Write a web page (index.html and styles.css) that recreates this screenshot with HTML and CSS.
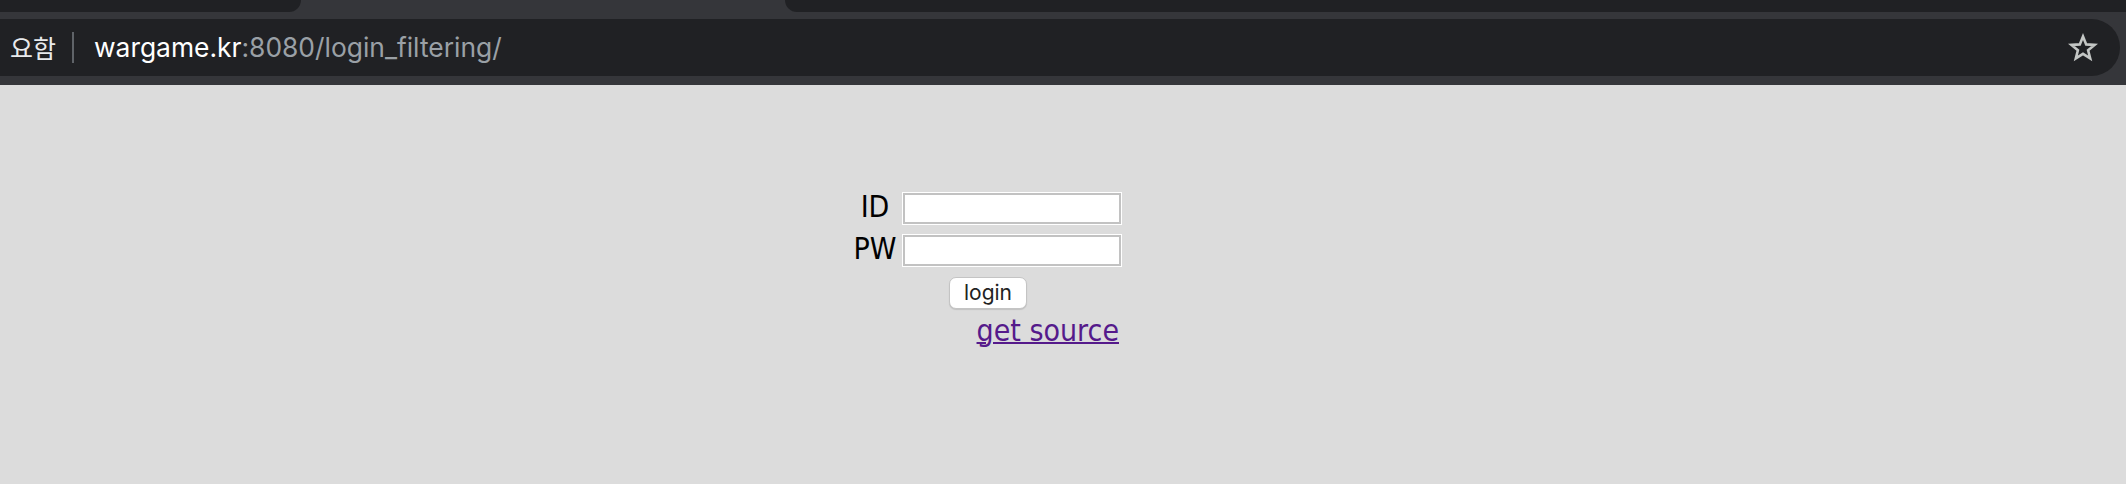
FILE: index.html
```
<!DOCTYPE html>
<html lang="ko">
<head>
<meta charset="utf-8">
<title>login filtering</title>
<link rel="stylesheet" href="styles.css">
</head>
<body>
<div class="chrome">
  <div class="tabstrip">
    <div class="tab-dark tab-left"></div>
    <div class="tab-active"></div>
    <div class="tab-dark tab-right"></div>
  </div>
  <div class="toolbar">
    <div class="omnibox">
      <span class="site-label">요함</span>
      <span class="sep"></span>
      <span class="url"><span class="host">wargame.kr</span><span class="path">:8080/login_filtering/</span></span>
      <span class="spacer"></span>
      <svg class="star" width="30" height="30" viewBox="0 0 30 30" aria-hidden="true">
        <polygon points="15,3.5 18.2,11.4 26.6,11.9 20.1,17.2 22.2,25.4 15,20.9 7.8,25.4 9.9,17.2 3.4,11.9 11.8,11.4" fill="none" stroke="#c4c7c5" stroke-width="2.6" stroke-linejoin="miter"/>
      </svg>
    </div>
  </div>
</div>
<div class="page">
  <form class="login">
    <label class="lbl" for="id">ID</label>
    <input class="field" id="id" type="text">
    <label class="lbl row2" for="pw">PW</label>
    <input class="field row2" id="pw" type="password">
    <div class="btn-row"><button type="button" class="btn">login</button></div>
    <div class="link-row"><a class="src" href="#">get source</a></div>
  </form>
</div>
</body>
</html>
```
FILE: styles.css
```
html, body {
  margin: 0;
  padding: 0;
  background: #dcdcdc;
  overflow: hidden;
}
.chrome {
  background: #35363a;
}
.tabstrip {
  display: flex;
  height: 12px;
}
.tab-dark {
  background: #202124;
  height: 12px;
}
.tab-left {
  width: 301px;
  border-radius: 0 0 12px 0;
}
.tab-active {
  width: 484px;
}
.tab-right {
  flex: 1;
  border-radius: 0 0 0 12px;
}
.toolbar {
  padding: 7px 6px 9px 0;
}
.omnibox {
  height: 57px;
  background: #202124;
  border-radius: 0 28.5px 28.5px 0;
  display: flex;
  align-items: center;
  padding: 0 22px 0 10px;
}
.site-label {
  font-family: "Noto Sans CJK KR", "Noto Sans", sans-serif;
  font-size: 25px;
  color: #e8eaed;
  line-height: 1;
}
.sep {
  width: 2px;
  height: 31px;
  background: #5f6368;
  margin-left: 16px;
}
.url {
  margin-left: 20px;
  font-family: Inter, Roboto, sans-serif;
  font-size: 26.4px;
  line-height: 1;
}
.host { color: #ffffff; }
.path { color: #9aa0a6; }
.spacer { flex: 1; }
.star { display: block; }
.page {
  height: 399px;
  padding: 107px 0 0 850px;
  box-sizing: border-box;
}
.login {
  display: grid;
  grid-template-columns: 50px 220px;
  column-gap: 2px;
  width: 272px;
  margin: 0;
}
.lbl {
  font-family: "DejaVu Sans Condensed", "DejaVu Sans", sans-serif;
  font-size: 30px;
  color: #000;
  text-align: center;
  line-height: 30px;
  height: 33px;
}
.field {
  height: 33px;
  width: 220px;
  box-sizing: border-box;
  border: 1px solid #ffffff;
  box-shadow: inset 0 0 0 2px #c2c2c2;
  background: #fff;
  margin: 0;
  padding: 0 4px;
  outline: none;
}
.row2 {
  margin-top: 9px;
}
.btn-row {
  grid-column: 1 / 3;
  display: flex;
  justify-content: center;
  margin-top: 10px;
}
.btn {
  width: 78px;
  height: 32px;
  box-sizing: border-box;
  background: #ffffff;
  border: 1px solid #c4c4c4;
  border-radius: 7px;
  box-shadow: 0 1px 1px rgba(0,0,0,0.12);
  font-family: Inter, Roboto, sans-serif;
  font-size: 21px;
  color: #222;
  padding: 0 0 2px;
  margin: 0 0 0 4px;
}
.link-row {
  grid-column: 1 / 3;
  text-align: right;
  margin-top: 5px;
  padding-right: 3px;
}
.src {
  font-family: "DejaVu Sans Condensed", "DejaVu Sans", sans-serif;
  font-size: 30px;
  line-height: 34px;
  color: #551a8b;
  text-decoration: underline;
  text-decoration-thickness: 2px;
}
```
